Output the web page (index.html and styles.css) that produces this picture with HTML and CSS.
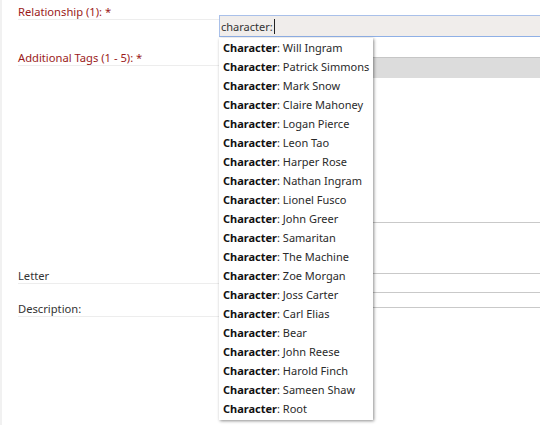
FILE: index.html
```html
<!DOCTYPE html>
<html>
<head>
<meta charset="utf-8">
<link rel="stylesheet" href="styles.css">
</head>
<body>
<div class="page">
  <div class="labels">
    <div class="label req r1">Relationship (1): *</div>
    <div class="label req r2">Additional Tags (1 - 5): *</div>
    <div class="label r3">Letter</div>
    <div class="label r4">Description:</div>
  </div>
  <div class="fields">
    <div class="autocomplete">
      <div class="input">character:<span class="caret"></span></div>
      <ul class="suggest">
        <li><b>Character</b>: Will Ingram</li>
        <li><b>Character</b>: Patrick Simmons</li>
        <li><b>Character</b>: Mark Snow</li>
        <li><b>Character</b>: Claire Mahoney</li>
        <li><b>Character</b>: Logan Pierce</li>
        <li><b>Character</b>: Leon Tao</li>
        <li><b>Character</b>: Harper Rose</li>
        <li><b>Character</b>: Nathan Ingram</li>
        <li><b>Character</b>: Lionel Fusco</li>
        <li><b>Character</b>: John Greer</li>
        <li><b>Character</b>: Samaritan</li>
        <li><b>Character</b>: The Machine</li>
        <li><b>Character</b>: Zoe Morgan</li>
        <li><b>Character</b>: Joss Carter</li>
        <li><b>Character</b>: Carl Elias</li>
        <li><b>Character</b>: Bear</li>
        <li><b>Character</b>: John Reese</li>
        <li><b>Character</b>: Harold Finch</li>
        <li><b>Character</b>: Sameen Shaw</li>
        <li><b>Character</b>: Root</li>
      </ul>
    </div>
    <div class="tags-input"></div>
    <div class="box b1"></div>
    <div class="box b2"></div>
    <div class="box b3"></div>
    <div class="box b4"></div>
  </div>
</div>
</body>
</html>
```

FILE: styles.css
```css
html, body {
  margin: 0;
  padding: 0;
  background: #fff;
}
body {
  font-family: "Noto Sans", "DejaVu Sans", sans-serif;
  font-size: 11px;
  color: #2a2a2a;
}
.page {
  display: grid;
  grid-template-columns: 201px 1fr;
  padding-left: 16px;
  min-height: 425px;
  box-sizing: border-box;
  border-left: 2px solid #f1f1f1;
}
.labels {
  display: flex;
  flex-direction: column;
}
.label {
  line-height: 14px;
  height: 14px;
  border-bottom: 1px solid #ededed;
  color: #333;
  font-size: 11.2px;
}
.label.req { color: #9b1a1a; }
.r1 { margin-top: 5px; }
.r2 { margin-top: 31px; }
.r3 { margin-top: 203px; }
.r4 { margin-top: 18px; }

.fields {
  display: flex;
  flex-direction: column;
}
.autocomplete {
  position: relative;
  margin-top: 15px;
}
.input {
  height: 19px;
  line-height: 19px;
  background: #f0edeb;
  border-top: 1px solid #a9c0e9;
  border-bottom: 1px solid #8fb0e6;
  border-left: 1px solid #a9c0e9;
  padding-left: 1px;
  padding-top: 1px;
  box-sizing: content-box;
  color: #333;
  display: flex;
  align-items: center;
}
.caret {
  display: inline-block;
  width: 0;
  height: 15px;
  border-left: 1px solid #222;
  margin-left: 1px;
}
.suggest {
  position: absolute;
  z-index: 2;
  top: 23px;
  left: 0;
  width: 154px;
  margin: 0;
  padding: 0 0 2px;
  list-style: none;
  background: #fff;
  box-shadow: 1px 1px 3px rgba(0, 0, 0, 0.45);
}
.suggest li {
  height: 19px;
  line-height: 19px;
  padding-left: 4px;
  color: #2a2a2a;
  white-space: nowrap;
}
.suggest b {
  color: #111;
  font-weight: 700;
}
.tags-input {
  margin-top: 20px;
  height: 20px;
  background: #dcdcdc;
  border-top: 1px solid #c6c6c6;
}
.box {
  border-bottom: 1px solid #c9c9c9;
}
.b1 { height: 144px; }
.b2 { height: 50px; }
.b3 { height: 18px; }
.b4 { height: 14px; }
```
